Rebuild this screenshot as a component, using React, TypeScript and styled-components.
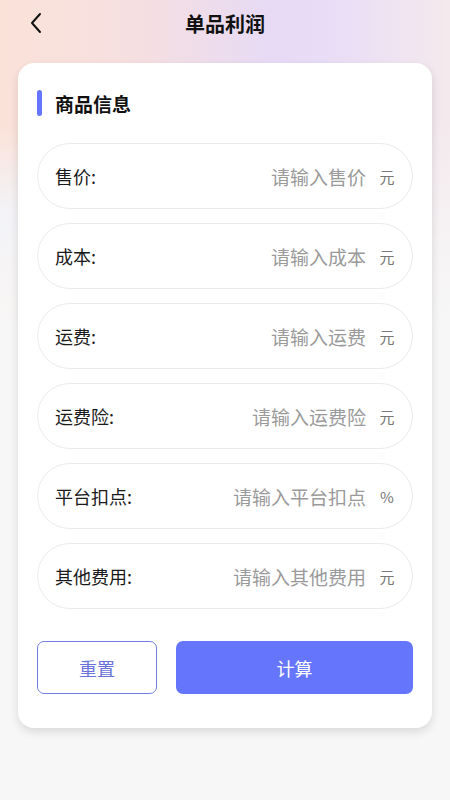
import React, { useState } from 'react';
import styled, { createGlobalStyle } from 'styled-components';

const GlobalStyle = createGlobalStyle`
  html, body { margin: 0; padding: 0; }
  body {
    font-family: "Noto Sans CJK SC", "Noto Sans", sans-serif;
    background: #f7f7f7;
  }
  * { box-sizing: border-box; }
`;

interface FieldDef {
    key: string;
    label: string;
    placeholder: string;
    unit: string;
}

const fields: FieldDef[] = [
    { key: 'price', label: '售价:', placeholder: '请输入售价', unit: '元' },
    { key: 'cost', label: '成本:', placeholder: '请输入成本', unit: '元' },
    { key: 'freight', label: '运费:', placeholder: '请输入运费', unit: '元' },
    { key: 'insurance', label: '运费险:', placeholder: '请输入运费险', unit: '元' },
    { key: 'commission', label: '平台扣点:', placeholder: '请输入平台扣点', unit: '%' },
    { key: 'other', label: '其他费用:', placeholder: '请输入其他费用', unit: '元' },
];

const App = () => {
    const [values, setValues] = useState<Record<string, string>>({});
    const handleChange = (key: string, v: string) => {
        setValues(prev => ({ ...prev, [key]: v }));
    }
    return (
        <Page>
            <GlobalStyle />
            <Header>
                <BackButton aria-label="back">
                    <svg width="14" height="22" viewBox="0 0 14 22" fill="none">
                        <path d="M11 2 L3 11 L11 20" stroke="#111" strokeWidth="2" strokeLinecap="round" strokeLinejoin="round" />
                    </svg>
                </BackButton>
                <Title>单品利润</Title>
            </Header>
            <Card>
                <SectionTitle>商品信息</SectionTitle>
                <FieldList>
                    {fields.map(f => (
                        <FieldRow key={f.key}>
                            <Label>{f.label}</Label>
                            <Input
                                value={values[f.key] || ''}
                                placeholder={f.placeholder}
                                onChange={e => handleChange(f.key, e.target.value)}
                            />
                            <Unit>{f.unit}</Unit>
                        </FieldRow>
                    ))}
                </FieldList>
                <Actions>
                    <ResetButton onClick={() => setValues({})}>重置</ResetButton>
                    <CalcButton>计算</CalcButton>
                </Actions>
            </Card>
        </Page>
    )
}

export default App;

const Page = styled.div`
    min-height: 800px;
    padding: 0 18px 40px;
    background:
        linear-gradient(to bottom, rgba(247,247,247,0) 0px, rgba(247,247,247,0) 120px, rgba(247,247,247,0.7) 240px, #f7f7f7 330px),
        radial-gradient(ellipse 120px 90px at 0px 230px, #eceffb 0%, rgba(236,239,251,0) 100%),
        linear-gradient(90deg, #fbe2d9 0%, #f6dfe0 30%, #e6daf6 62%, #e9def6 75%, #f4e9ec 100%);
`;

const Header = styled.div`
    height: 46px;
    display: flex;
    align-items: center;
    justify-content: center;
    position: relative;
`;

const BackButton = styled.button`
    position: absolute;
    left: 11px;
    top: 12px;
    border: none;
    background: none;
    padding: 0;
    display: flex;
`;

const Title = styled.div`
    font-size: 20px;
    font-weight: 700;
    color: #111;
`;

const Card = styled.div`
    margin-top: 17px;
    background: #fff;
    border-radius: 16px;
    box-shadow: 0 4px 10px rgba(0, 0, 0, 0.12);
    padding: 26px 19px 34px;
`;

const SectionTitle = styled.div`
    display: flex;
    align-items: center;
    gap: 13px;
    font-size: 19px;
    font-weight: 700;
    color: #111;
    height: 28px;
    &::before {
        content: '';
        width: 5px;
        height: 26px;
        border-radius: 3px;
        background: #6576fc;
    }
`;

const FieldList = styled.div`
    margin-top: 26px;
    display: flex;
    flex-direction: column;
    gap: 14px;
`;

const FieldRow = styled.label`
    height: 66px;
    border: 1px solid #ebebeb;
    border-radius: 33px;
    display: flex;
    align-items: center;
    padding: 0 17px 0 17px;
`;

const Label = styled.span`
    font-size: 18px;
    color: #1a1a1a;
    white-space: nowrap;
`;

const Input = styled.input`
    flex: 1;
    min-width: 0;
    border: none;
    outline: none;
    background: transparent;
    text-align: right;
    font-family: inherit;
    font-size: 19px;
    color: #222;
    &::placeholder { color: #9a9a9a; }
`;

const Unit = styled.span`
    margin-left: 11px;
    font-size: 15px;
    color: #777;
    width: 16px;
    text-align: center;
`;

const Actions = styled.div`
    margin-top: 32px;
    display: grid;
    grid-template-columns: 120px 1fr;
    column-gap: 19px;
`;

const ResetButton = styled.button`
    height: 53px;
    border: 1px solid #7380e2;
    border-radius: 7px;
    background: #fff;
    color: #6872d8;
    font-family: inherit;
    font-size: 18px;
`;

const CalcButton = styled.button`
    height: 53px;
    border: none;
    border-radius: 7px;
    background: #6576fc;
    color: #fff;
    font-family: inherit;
    font-size: 18px;
`;
